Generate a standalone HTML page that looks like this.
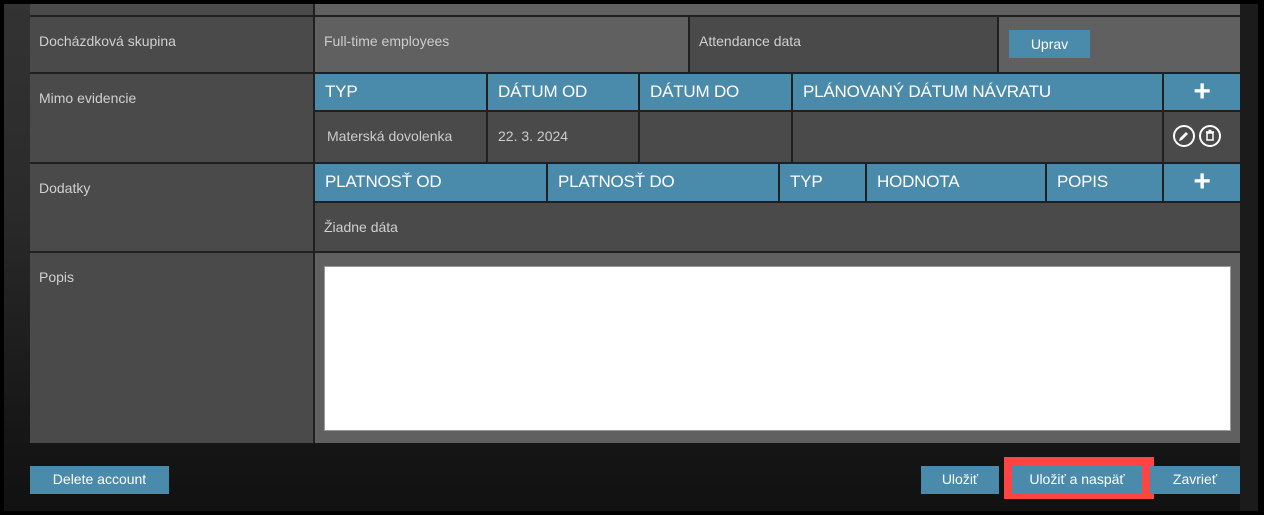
<!DOCTYPE html>
<html><head><meta charset="utf-8"><style>
*{margin:0;padding:0;box-sizing:border-box}
body{width:1264px;height:515px;background:#000;font-family:"Liberation Sans",sans-serif;position:relative;overflow:hidden}
.frame{position:absolute;left:4px;top:4px;width:1254px;height:507px;background:linear-gradient(#333 0,#2a2a2a 40%,#161616 85%,#111)}
.a{position:absolute}
.l{background:#4a4a4a}
.g{background:#606060}
.h{background:#4a8aaa;color:#fff;font-size:17px;line-height:36px;padding-left:10px;white-space:nowrap;letter-spacing:-0.2px}
.t{color:#d0d0d0;font-size:14px}
.btn{position:absolute;background:#4a8aaa;color:#fff;font-size:14px;text-align:center;line-height:27px}
</style></head><body>
<div class="frame"></div>
<div class="a" style="left:1240px;top:4px;width:18px;height:507px;background:#1b1b1b"></div>
<div class="a" style="left:30px;top:4px;width:1210px;height:439px;background:#202020"></div>
<div class="a l" style="left:30px;top:4px;width:283px;height:11px"></div>
<div class="a g" style="left:315px;top:4px;width:925px;height:11px"></div>
<div class="a l t" style="left:30px;top:17px;width:283px;height:55px;padding:16px 0 0 9px">Docházdková skupina</div>
<div class="a g t" style="left:315px;top:17px;width:373px;height:55px;padding:16px 0 0 9px;color:#ccc">Full-time employees</div>
<div class="a l t" style="left:690px;top:17px;width:307px;height:55px;padding:16px 0 0 9px">Attendance data</div>
<div class="a g" style="left:999px;top:17px;width:241px;height:55px"></div>
<div class="btn" style="left:1009px;top:30px;width:81px;height:28px;line-height:28px">Uprav</div>
<div class="a l t" style="left:30px;top:74px;width:283px;height:88px;padding:16px 0 0 9px">Mimo evidencie</div>
<div class="a h" style="left:315px;top:74px;width:171px;height:36px">TYP</div>
<div class="a h" style="left:488px;top:74px;width:150px;height:36px">DÁTUM OD</div>
<div class="a h" style="left:640px;top:74px;width:151px;height:36px">DÁTUM DO</div>
<div class="a h" style="left:793px;top:74px;width:369px;height:36px">PLÁNOVANÝ DÁTUM NÁVRATU</div>
<div class="a h" style="left:1164px;top:74px;width:76px;height:36px;padding:0;text-align:center;font-size:30px;font-weight:bold">+</div>
<div class="a l t" style="left:315px;top:112px;width:171px;height:50px;padding:16px 0 0 12px;color:#ccc">Materská dovolenka</div>
<div class="a l t" style="left:488px;top:112px;width:150px;height:50px;padding:16px 0 0 10px;color:#ccc">22. 3. 2024</div>
<div class="a l" style="left:640px;top:112px;width:151px;height:50px"></div>
<div class="a l" style="left:793px;top:112px;width:369px;height:50px"></div>
<div class="a l" style="left:1164px;top:112px;width:76px;height:50px">
<svg width="76" height="50"><circle cx="20" cy="24" r="10" fill="none" stroke="#fff" stroke-width="2"/><path d="M15 29l1-3 6-6 2 2-6 6z" fill="#fff"/><circle cx="46" cy="24" r="10" fill="none" stroke="#fff" stroke-width="2"/><rect x="43" y="21" width="6" height="7" fill="none" stroke="#fff" stroke-width="1.5"/><path d="M42 20h8M44.5 18.5h3" stroke="#fff" stroke-width="1.5"/></svg></div>
<div class="a l t" style="left:30px;top:164px;width:283px;height:87px;padding:16px 0 0 9px">Dodatky</div>
<div class="a h" style="left:315px;top:164px;width:231px;height:37px">PLATNOSŤ OD</div>
<div class="a h" style="left:548px;top:164px;width:230px;height:37px">PLATNOSŤ DO</div>
<div class="a h" style="left:780px;top:164px;width:85px;height:37px">TYP</div>
<div class="a h" style="left:867px;top:164px;width:178px;height:37px">HODNOTA</div>
<div class="a h" style="left:1047px;top:164px;width:115px;height:37px">POPIS</div>
<div class="a h" style="left:1164px;top:164px;width:76px;height:37px;padding:0;text-align:center;font-size:30px;font-weight:bold">+</div>
<div class="a l t" style="left:315px;top:203px;width:925px;height:48px;padding:16px 0 0 9px">Žiadne dáta</div>
<div class="a l t" style="left:30px;top:253px;width:283px;height:190px;padding:16px 0 0 9px">Popis</div>
<div class="a g" style="left:315px;top:253px;width:925px;height:190px"></div>
<div class="a" style="left:324px;top:266px;width:907px;height:165px;background:#fff;border:1px solid #999"></div>
<div class="btn" style="left:30px;top:466px;width:139px;height:28px">Delete account</div>
<div class="btn" style="left:921px;top:466px;width:78px;height:28px">Uložiť</div>
<div class="a" style="left:1004px;top:457px;width:150px;height:42px;background:#ff4444"></div>
<div class="btn" style="left:1012px;top:466px;width:130px;height:28px">Uložiť a naspäť</div>
<div class="btn" style="left:1150px;top:466px;width:90px;height:28px">Zavrieť</div>
</body></html>
